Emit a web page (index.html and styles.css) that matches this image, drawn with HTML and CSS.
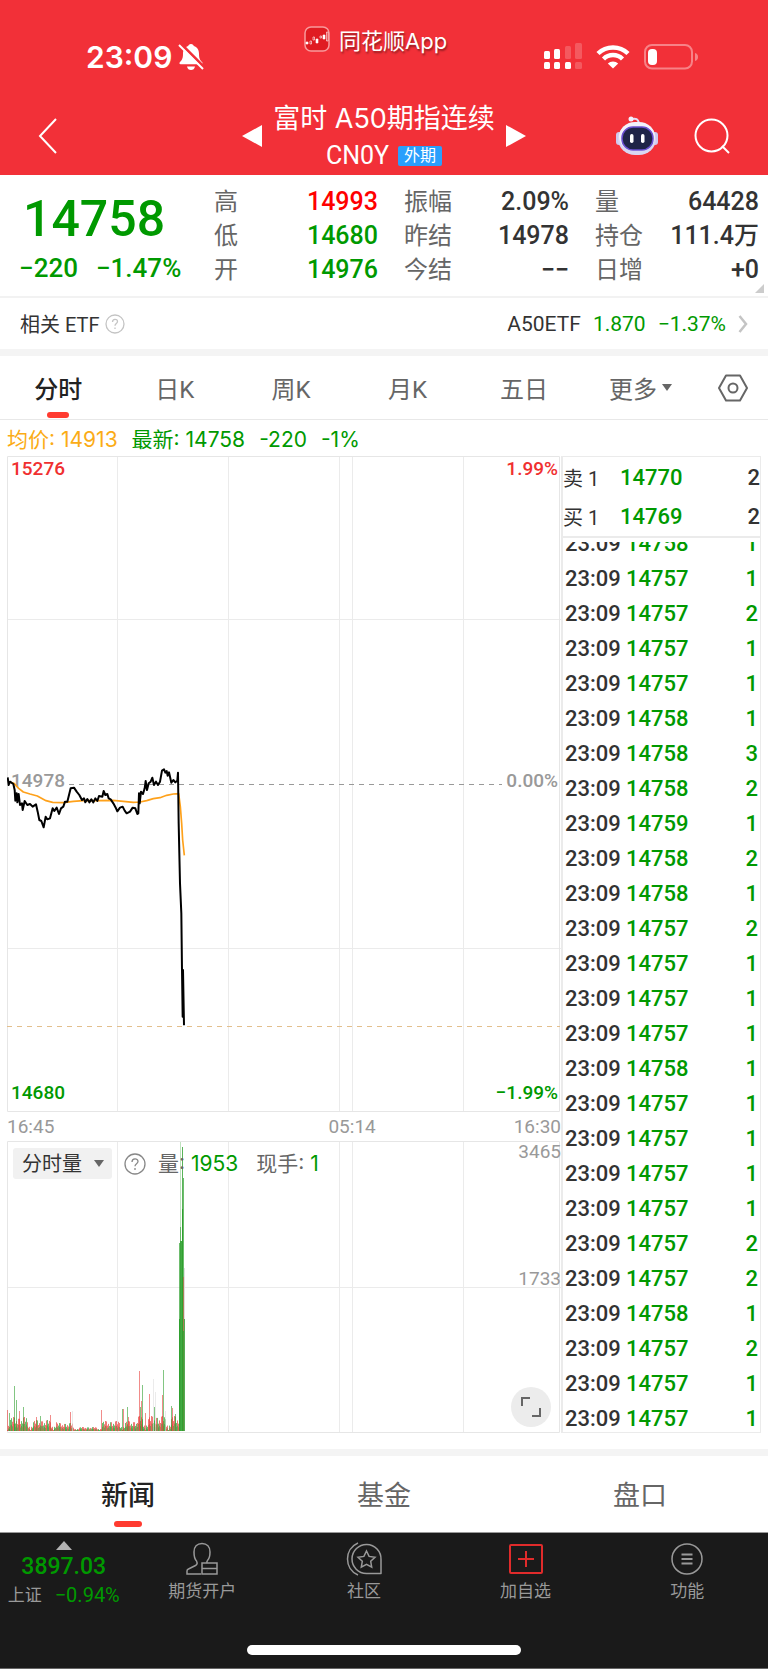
FILE: index.html
```html
<!DOCTYPE html>
<html lang="zh-CN">
<head>
    <meta charset="UTF-8">
    <meta name="viewport" content="width=device-width, initial-scale=1.0">
    <title>富时A50期指连续</title>
    <link rel="stylesheet" href="styles.css">
</head>
<body>
    <header class="header">
        <div class="status-bar">
            <div class="clock">
                <span>23:09</span>
                <svg width="26" height="28" viewBox="0 0 26 28">
                    <path d="M13 1c1.800 0 2.500 1 2.800 2 3.700 1.200 5.200 4.200 5.200 8 0 5 1.500 6.500 3 8 1 1 .6 2.300-.6 2.300H2.600C1.400 21.300 1 20 2 19c1.500-1.500 3-3 3-8 0-3.800 1.500-6.800 5.200-8 .3-1 1-2 2.800-2z" fill="#fff"/>
                    <path d="M9 23.500h8c-.5 2.500-2 3.500-4 3.500s-3.500-1-4-3.500z" fill="#fff"/>
                    <path d="M3 1l23 23" stroke="#f23038" stroke-width="3"/>
                    <path d="M1 2l24 24" stroke="#fff" stroke-width="2"/>
                </svg>
            </div>
            <div class="app-name">
                <svg width="26" height="26" viewBox="0 0 26 26">
                    <rect x="1" y="1" width="24" height="24" rx="6" fill="#e01c22" stroke="#f89a9c" stroke-width="1.500"/>
                    <g fill="#fff" stroke="#fff" stroke-width=".6">
                        <path d="M2 16h2v2H2zM12 13h2v4h-2zM19 9h2v4h-2z"/>
                        <path d="M6 15h1.500v3H6zM9 11h1.500v3H9zM16 10h1.500v2H16zM22.500 6H24v9h-1.500z" fill="none"/>
                    </g>
                </svg>
                <span>同花顺App</span>
            </div>
            <div class="signals">
                <svg width="38" height="28" viewBox="0 0 38 28" fill="#fff">
                    <rect x="0" y="8" width="6" height="8" rx="1.500"/>
                    <rect x="10" y="6" width="6" height="10" rx="1.500"/>
                    <rect x="21" y="3" width="6" height="13" rx="1.500" opacity=".2"/>
                    <rect x="31" y="0" width="7" height="16" rx="1.500" opacity=".2"/>
                    <rect x="0" y="19" width="6" height="7" rx="1.500"/>
                    <rect x="10" y="19" width="6" height="7" rx="1.500"/>
                    <rect x="21" y="19" width="6" height="7" rx="1.500"/>
                    <rect x="31" y="19" width="7" height="7" rx="1.500" opacity=".2"/>
                </svg>
                <svg width="34" height="26" viewBox="0 0 34 26" fill="none" stroke="#fff" stroke-width="4.500">
                    <path d="M2 9.500a21.500 21.500 0 0 1 30 0"/>
                    <path d="M7.500 15a13.500 13.500 0 0 1 19 0"/>
                    <path d="M17 24.500l-5.200-5a7.500 7.500 0 0 1 10.400 0z" fill="#fff" stroke="none"/>
                </svg>
                <svg width="54" height="26" viewBox="0 0 54 26">
                    <rect x="1" y="1" width="47" height="23.500" rx="7" fill="none" stroke="#fff" stroke-opacity=".4" stroke-width="2"/>
                    <path d="M51 9c2 .5 3 2 3 4s-1 3.500-3 4z" fill="#fff" fill-opacity=".4"/>
                    <rect x="4" y="5" width="9" height="16" rx="4" fill="#fff"/>
                </svg>
            </div>
        </div>
        <nav class="nav">
            <button class="icon-btn back" aria-label="返回">
                <svg width="20" height="36" viewBox="0 0 20 36" fill="none" stroke="#fff" stroke-width="2">
                    <path d="M18 1L2 18l16 17"/>
                </svg>
            </button>
            <div class="title-group">
                <button class="icon-btn" aria-label="上一个">
                    <svg width="20" height="22" viewBox="0 0 20 22"><path d="M20 0v22L0 11z" fill="#fff"/></svg>
                </button>
                <div class="title">
                    <h1>富时 A50期指连续</h1>
                    <p>CN0Y <span class="tag">外期</span></p>
                </div>
                <button class="icon-btn" aria-label="下一个">
                    <svg width="20" height="22" viewBox="0 0 20 22"><path d="M0 0v22l20-11z" fill="#fff"/></svg>
                </button>
            </div>
            <div class="tools">
                <button class="icon-btn" aria-label="智能助手">
                    <svg width="42" height="40" viewBox="0 0 42 40">
                        <path d="M16 3c4-1 6 0 7 4" fill="none" stroke="#e4dcf5" stroke-width="2"/>
                        <circle cx="15" cy="3" r="2.500" fill="#f3effc"/>
                        <rect x="0" y="16" width="6" height="13" rx="3" fill="#cfc9ee"/>
                        <rect x="36" y="16" width="6" height="13" rx="3" fill="#cfc9ee"/>
                        <rect x="2" y="7" width="38" height="32" rx="17" fill="#d9d6f2"/>
                        <rect x="3" y="6" width="36" height="29" rx="16" fill="#f2f1fb"/>
                        <rect x="6" y="11" width="31" height="23" rx="11" fill="#1f2447" stroke="#6a4fd0" stroke-width="1.500"/>
                        <rect x="14" y="18" width="3.500" height="9" rx="1.700" fill="#fff"/>
                        <rect x="25" y="18" width="3.500" height="9" rx="1.700" fill="#fff"/>
                    </svg>
                </button>
                <button class="icon-btn" aria-label="搜索">
                    <svg width="36" height="36" viewBox="0 0 36 36" fill="none" stroke="#fff" stroke-width="2">
                        <circle cx="17.500" cy="17.500" r="16"/>
                        <path d="M28 28l7 7"/>
                    </svg>
                </button>
            </div>
        </nav>
    </header>

    <section class="quote">
        <div class="last">
            <p class="last-price">14758</p>
            <p class="last-change"><span>−220</span><span>−1.47%</span></p>
        </div>
        <dl class="stats">
            <div><dt>高</dt><dd class="up">14993</dd></div>
            <div><dt>低</dt><dd class="down">14680</dd></div>
            <div><dt>开</dt><dd class="down">14976</dd></div>
        </dl>
        <dl class="stats">
            <div><dt>振幅</dt><dd>2.09%</dd></div>
            <div><dt>昨结</dt><dd>14978</dd></div>
            <div><dt>今结</dt><dd>−−</dd></div>
        </dl>
        <dl class="stats">
            <div><dt>量</dt><dd>64428</dd></div>
            <div><dt>持仓</dt><dd>111.4万</dd></div>
            <div><dt>日增</dt><dd>+0</dd></div>
        </dl>
        <span class="corner"></span>
    </section>

    <a class="etf" href="#etf">
        <span>相关 ETF</span>
        <svg width="20" height="20" viewBox="0 0 20 20" fill="none" stroke="#c4c4c4" stroke-width="1.300">
            <circle cx="10" cy="10" r="9"/>
            <path d="M7.500 8c0-3.500 5-3.500 5-.4 0 2-2.500 2-2.500 4.200M10 13.500V15"/>
        </svg>
        <span class="etf-name">A50ETF</span>
        <span class="down">1.870</span>
        <span class="down">−1.37%</span>
        <svg class="etf-arrow" width="10" height="18" viewBox="0 0 10 18" fill="none" stroke="#c4c4c4" stroke-width="2.500">
            <path d="M1.500 1L8 9l-6.500 8"/>
        </svg>
    </a>

    <nav class="periods">
        <button class="active">分时</button>
        <button>日K</button>
        <button>周K</button>
        <button>月K</button>
        <button>五日</button>
        <button>更多<svg width="10" height="7" viewBox="0 0 10 7"><path d="M0 0h10L5 7z" fill="#666"/></svg></button>
        <button class="settings" aria-label="设置">
            <svg width="30" height="28" viewBox="0 0 30 28" fill="none" stroke="#666" stroke-width="2">
                <path d="M8 1.500h14L29 14l-7 12.500H8L1 14z" stroke-linejoin="round"/>
                <circle cx="15" cy="14" r="4.500"/>
            </svg>
        </button>
    </nav>

    <p class="legend">
        <span class="avg">均价: 14913</span>
        <span class="down">最新: 14758</span>
        <span class="down">-220</span>
        <span class="down">-1%</span>
    </p>

    <main class="board">
        <div class="charts">
            <svg class="chart" viewBox="0 0 554 656">
                <g class="grid">
                    <path d="M110.500 0v656M221.500 0v656M332.500 0v656M345.500 0v656M456.500 0v656M0 163.500h554M0 492.500h554"/>
                    <path class="frame" d="M.5.5h552v655H.5z"/>
                </g>
                <path d="M62 328.500h433" stroke="#999" stroke-dasharray="5 5"/>
                <path d="M0 570.500h553" stroke="#e3bf8d" stroke-dasharray="5 5"/>
                <text x="4" y="19" class="t-up">15276</text>
                <text x="551" y="19" class="t-up end">1.99%</text>
                <text x="4" y="331">14978</text>
                <text x="551" y="331" class="end">0.00%</text>
                <text x="4" y="643" class="t-down">14680</text>
                <text x="551" y="643" class="t-down end">−1.99%</text>
                <svg viewBox="21 -852 1662 1968" width="554" height="656" fill="none" stroke-linejoin="round">
                    <polyline stroke="#fea11b" stroke-width="5" points="24,125 42,130 56,145 70,156 90,162 112,168 138,182 158,187 190,188 220,184 250,182 290,182 340,181 370,184 400,187 420,186 440,182 460,176 480,173 500,166 520,162 536,161 541,200 545,250 548,300 553,346"/>
                    <polyline stroke="#000" stroke-width="6" points="23,112 26,135 30,125 40,132 44,150 46,182 50,160 52,187 56,162 60,195 66,190 68,210 74,183 82,195 90,192 98,200 108,193 113,215 118,240 124,243 131,262 137,230 142,238 150,235 158,205 163,213 170,203 177,222 183,205 190,200 195,185 202,185 207,165 212,145 222,143 230,155 238,165 246,180 252,175 256,187 262,177 268,187 274,178 280,187 286,175 292,183 297,168 307,170 311,153 316,165 322,162 326,175 332,178 340,190 348,205 352,214 360,203 368,200 374,212 380,220 390,215 398,203 406,205 412,222 415,220 417,160 419,190 423,155 429,162 434,145 437,123 441,150 446,130 452,125 457,113 462,135 468,125 474,135 480,125 486,92 492,88 496,98 500,93 503,107 507,97 514,128 520,120 526,127 532,122 534,98 536,250 540,430 544,520 546,690 548,830 549,690 552,856"/>
                </svg>
            </svg>
            <div class="times"><span>16:45</span><span>05:14</span><span>16:30</span></div>
            <div class="volume">
                <svg class="chart" viewBox="0 0 554 292">
                    <g class="grid">
                        <path d="M110.500 0v292M221.500 0v292M332.500 0v292M345.500 0v292M456.500 0v292M0 146.500h554"/>
                        <path class="frame" d="M.5.5h552v291H.5z"/>
                    </g>
                    <text x="554" y="17" class="thin end">3465</text>
                    <text x="554" y="144" class="thin end">1733</text>
                    <g id="bars"></g>
                </svg>
                <div class="volume-head">
                    <span class="picker">
                        <select aria-label="指标">
                            <option>分时量</option>
                        </select>
                    </span>
                    <svg width="22" height="22" viewBox="0 0 22 22" fill="none" stroke="#888" stroke-width="1.300">
                        <circle cx="11" cy="11" r="10"/>
                        <path d="M8 9c0-4 6-4 6-.4 0 2.200-3 2.200-3 4.700M11 15v2"/>
                    </svg>
                    <span class="amount">量: <b>1953</b></span>
                    <span class="amount">现手: <b>1</b></span>
                </div>
                <button class="expand" aria-label="全屏">
                    <svg width="22" height="22" viewBox="0 0 22 22" fill="none" stroke="#666" stroke-width="2">
                        <path d="M2 10V2h8M20 12v8h-8"/>
                    </svg>
                </button>
            </div>
        </div>
        <aside class="side">
            <table class="orders">
                <tr><th>卖 1</th><td>14770</td><td>2</td></tr>
                <tr><th>买 1</th><td>14769</td><td>2</td></tr>
            </table>
            <div class="ticks">
                <table>
                    <tr><th>23:09</th><td>14758</td><td>1</td></tr>
                    <tr><th>23:09</th><td>14757</td><td>1</td></tr>
                    <tr><th>23:09</th><td>14757</td><td>2</td></tr>
                    <tr><th>23:09</th><td>14757</td><td>1</td></tr>
                    <tr><th>23:09</th><td>14757</td><td>1</td></tr>
                    <tr><th>23:09</th><td>14758</td><td>1</td></tr>
                    <tr><th>23:09</th><td>14758</td><td>3</td></tr>
                    <tr><th>23:09</th><td>14758</td><td>2</td></tr>
                    <tr><th>23:09</th><td>14759</td><td>1</td></tr>
                    <tr><th>23:09</th><td>14758</td><td>2</td></tr>
                    <tr><th>23:09</th><td>14758</td><td>1</td></tr>
                    <tr><th>23:09</th><td>14757</td><td>2</td></tr>
                    <tr><th>23:09</th><td>14757</td><td>1</td></tr>
                    <tr><th>23:09</th><td>14757</td><td>1</td></tr>
                    <tr><th>23:09</th><td>14757</td><td>1</td></tr>
                    <tr><th>23:09</th><td>14758</td><td>1</td></tr>
                    <tr><th>23:09</th><td>14757</td><td>1</td></tr>
                    <tr><th>23:09</th><td>14757</td><td>1</td></tr>
                    <tr><th>23:09</th><td>14757</td><td>1</td></tr>
                    <tr><th>23:09</th><td>14757</td><td>1</td></tr>
                    <tr><th>23:09</th><td>14757</td><td>2</td></tr>
                    <tr><th>23:09</th><td>14757</td><td>2</td></tr>
                    <tr><th>23:09</th><td>14758</td><td>1</td></tr>
                    <tr><th>23:09</th><td>14757</td><td>2</td></tr>
                    <tr><th>23:09</th><td>14757</td><td>1</td></tr>
                    <tr><th>23:09</th><td>14757</td><td>1</td></tr>
                </table>
            </div>
        </aside>
    </main>

    <nav class="sections">
        <button class="active">新闻</button>
        <button>基金</button>
        <button>盘口</button>
    </nav>

    <footer class="footer">
        <nav class="dock">
            <a class="index" href="#index">
                <svg width="16" height="9" viewBox="0 0 16 9"><path d="M8 0l8 9H0z" fill="#b3b3b3"/></svg>
                <span class="index-value">3897.03</span>
                <span class="index-row"><span>上证</span><span class="index-change">−0.94%</span></span>
            </a>
            <a href="#open">
                <svg width="34" height="34" viewBox="0 0 34 34" fill="none" stroke="#999" stroke-width="1.500">
                    <path d="M16 32H2v-3c0-1 .5-1.600 1.500-2l7-3.500c2-1 2-2.500 1-4.500C9.500 17 9 14 9 10c0-5 3-8.500 8-8.500s8 3.500 8 8.500c0 4-.5 6.500-2.500 8.500-.8 1-.8 1.500-.5 2.500"/>
                    <path d="M17 21h15v11H17zM17 26.500h15"/>
                </svg>
                <span>期货开户</span>
            </a>
            <a href="#community">
                <svg width="36" height="34" viewBox="0 0 36 34" fill="none" stroke="#999" stroke-width="1.500">
                    <path d="M35 31.500V17.500a14.500 14.500 0 1 0-14.500 14z" stroke-linejoin="round"/>
                    <path d="M12 1C-2 7-2 27 12 33"/>
                    <path d="M20.500 9l2.600 5.400 5.900.8-4.300 4.100 1 5.900-5.200-2.800-5.200 2.800 1-5.900-4.300-4.100 5.900-.8z"/>
                </svg>
                <span>社区</span>
            </a>
            <a href="#add">
                <svg width="34" height="34" viewBox="0 0 34 34" fill="none" stroke="#e02b2b" stroke-width="2">
                    <rect x="1" y="3" width="32" height="28" rx="1"/>
                    <path d="M9 17h16M17 9v16"/>
                </svg>
                <span>加自选</span>
            </a>
            <a href="#more">
                <svg width="34" height="34" viewBox="0 0 34 34" fill="none" stroke="#999" stroke-width="1.500">
                    <circle cx="17" cy="17" r="15"/>
                    <path d="M11.500 12.500h11M11.500 17h11M11.500 21.500h11" stroke-width="2"/>
                </svg>
                <span>功能</span>
            </a>
        </nav>
        <div class="home-bar"></div>
    </footer>

    <script>
        const green = '#2fa02f';
        const red = '#e8403c';
        const gray = '#dddddd';
        const base = 290;
        const bars = document.getElementById('bars');

        // [x, height, color]
        const spikes = [
            [0, 21, red], [2, 18, green], [7, 45, green], [9, 31, green], [12, 20, red], [16, 24, green],
            [29, 14, red], [33, 15, green], [43, 16, red], [63, 19, red], [65, 20, gray], [94, 21, red],
            [115, 22, green], [116, 22, red], [120, 24, green], [121, 14, red], [132, 60, red], [133, 24, green],
            [134, 30, red], [135, 46, green], [138, 18, red], [142, 37, red], [146, 52, gray], [147, 24, green],
            [148, 39, gray], [155, 36, red], [156, 61, green], [158, 20, gray], [164, 25, green], [165, 23, red], [168, 17, green]
        ];
        // [x, height, color, opacity]
        const surge = [
            [172, 112, green, 1], [172, 188, green, .7], [173, 289, green, .3], [173, 204, green, .6],
            [174, 190, green, .9], [175, 284, green, .8], [176, 253, green, .7], [175, 222, green, 1],
            [173, 190, green, .8], [177, 163, gray, .9], [176, 154, red, .5], [177, 112, green, .8], [176, 100, green, .7]
        ];

        function addBar(x, h, color, opacity) {
            const bar = document.createElementNS('http://www.w3.org/2000/svg', 'rect');
            bar.setAttribute('x', x);
            bar.setAttribute('y', base - h);
            bar.setAttribute('width', 1);
            bar.setAttribute('height', h);
            bar.setAttribute('fill', color);
            bar.setAttribute('opacity', opacity);
            bars.appendChild(bar);
        }

        function maxHeight(x) {
            if (x < 20) return 13;
            if (x < 50) return 10;
            if (x < 66) return 7;
            if (x < 95) return 3;
            if (x < 130) return 9;
            return 14;
        }

        for (let x = 0; x < 172; x++) {
            const h = 1 + (x * x * 7 % 23) / 22 * maxHeight(x);
            addBar(x, h, x * x % 11 < 5 ? red : green, 0.7);
            addBar(x, h / 2, x % 3 ? green : red, 0.5);
        }
        spikes.forEach(s => addBar(s[0], s[1], s[2], 0.6));
        surge.forEach(s => addBar(s[0], s[1], s[2], s[3]));
    </script>
</body>
</html>
```

FILE: styles.css
```css
* {
    box-sizing: border-box;
}

body {
    margin: 0;
    background: #fff;
    color: #333;
    font-family: Roboto, "Noto Sans CJK SC", sans-serif;
    font-size: 20px;
}

h1, p, dl, dd {
    margin: 0;
}

button {
    padding: 0;
    border: none;
    background: none;
    color: inherit;
    font: inherit;
    cursor: pointer;
}

a {
    color: inherit;
    text-decoration: none;
}

svg {
    display: block;
    flex-shrink: 0;
}

.up {
    color: #f00;
}

.down {
    color: #090;
}

/* header */
.header {
    background: #f23038;
    color: #fff;
}

.status-bar {
    display: grid;
    grid-template-columns: 304fr 240fr 154fr;
    height: 92px;
    padding-right: 70px;
}

.clock {
    display: flex;
    align-items: center;
    gap: 6px;
    padding: 22px 0 0 86px;
    font-family: Inter, sans-serif;
    font-size: 30px;
    font-weight: 600;
}

.app-name {
    display: flex;
    align-items: center;
    align-self: start;
    gap: 9px;
    height: 78px;
    font-family: Inter, "Noto Sans CJK SC", sans-serif;
    font-size: 22px;
    text-shadow: 1px 2px 2px rgba(0, 0, 0, 0.4);
}

.signals {
    display: flex;
    align-items: center;
    justify-content: flex-end;
    gap: 14px;
    padding-top: 22px;
}

.nav {
    display: grid;
    grid-template-columns: 1fr auto 1fr;
    align-items: center;
    height: 83px;
    padding: 4px 38px 0;
}

.back {
    justify-self: start;
}

.title-group {
    display: flex;
    align-items: center;
    gap: 11px;
}

.title {
    text-align: center;
}

.title h1 {
    font-family: Inter, "Noto Sans CJK SC", sans-serif;
    font-size: 27px;
    font-weight: 400;
    line-height: 40px;
}

.title p {
    display: flex;
    align-items: center;
    justify-content: center;
    gap: 9px;
    font-size: 25px;
    line-height: 34px;
}

.tag {
    padding: 0 6px;
    border-radius: 2px;
    background: #2a9ffc;
    font-size: 16px;
    line-height: 20px;
}

.tools {
    display: flex;
    align-items: center;
    justify-content: flex-end;
    gap: 36px;
}

/* quote */
.quote {
    position: relative;
    display: grid;
    grid-template-columns: 169fr 164fr 165fr 164fr;
    column-gap: 26px;
    padding: 10px 9px 9px 19px;
    border-bottom: 2px solid #f2f2f2;
}

.last {
    color: #090;
    font-weight: 500;
}

.last-price {
    padding: 4px 0 0 4px;
    font-size: 50px;
    line-height: 60px;
}

.last-change {
    display: flex;
    gap: 18px;
    font-size: 26px;
    line-height: 38px;
    white-space: nowrap;
}

.stats div {
    display: flex;
    justify-content: space-between;
    align-items: center;
    line-height: 34px;
    white-space: nowrap;
}

.stats dt {
    color: #666;
    font-size: 24px;
}

.stats dd {
    font-size: 25px;
    font-weight: 500;
}

.corner {
    position: absolute;
    right: 4px;
    bottom: 3px;
    border-left: 9px solid transparent;
    border-bottom: 9px solid #ccc;
}

.etf {
    display: flex;
    align-items: center;
    gap: 5px;
    height: 58px;
    padding: 0 20px;
    border-bottom: 7px solid #f4f4f4;
}

.etf .down {
    margin-left: 7px;
    font-size: 21px;
}

.etf-name {
    margin-left: auto;
    font-size: 21px;
}

.etf-arrow {
    margin-left: 7px;
}

/* period tabs */
.periods {
    display: flex;
    height: 64px;
    border-bottom: 1px solid #e8e8e8;
    color: #666;
    font-size: 24px;
}

.periods button {
    position: relative;
    display: flex;
    align-items: center;
    justify-content: center;
    gap: 5px;
    flex: 116;
}

.periods .settings {
    flex: 69;
}

.periods .active,
.sections .active {
    color: #222;
    font-weight: 500;
}

.active::after {
    content: "";
    position: absolute;
    bottom: 1px;
    left: 50%;
    width: 22px;
    height: 6px;
    margin-left: -11px;
    border-radius: 3px;
    background: #ff3b30;
}

.legend {
    display: flex;
    gap: 14px;
    padding: 3px 7px 0;
    font-family: Inter, "Noto Sans CJK SC", sans-serif;
    font-size: 21px;
    line-height: 33px;
}

.avg {
    color: #fbac16;
}

/* charts */
.board {
    display: grid;
    grid-template-columns: 554fr 200fr;
    padding: 0 7px 16px;
}

.chart {
    width: 100%;
    height: auto;
}

.chart text {
    fill: #999;
    font-size: 19px;
    font-weight: 500;
}

.chart .thin {
    font-weight: 400;
}

.chart .t-up {
    fill: #f03030;
}

.chart .t-down {
    fill: #090;
}

.chart .end {
    text-anchor: end;
}

.grid {
    fill: none;
    stroke: #ebebeb;
}

.frame {
    stroke: #e6e6e6;
}

.times {
    display: grid;
    grid-template-columns: 321fr auto 185fr;
    color: #999;
    font-size: 19px;
    line-height: 29px;
}

.times span:last-child {
    text-align: right;
}

.volume {
    position: relative;
}

.volume-head {
    position: absolute;
    top: 7px;
    left: 6px;
    display: flex;
    align-items: center;
    gap: 12px;
    color: #666;
    font-family: Inter, "Noto Sans CJK SC", sans-serif;
    font-size: 21px;
    line-height: 30px;
}

.picker {
    position: relative;
}

.picker select {
    display: block;
    width: 99px;
    height: 31px;
    padding: 0 9px;
    border: none;
    border-radius: 3px;
    background: #f1f1f1;
    color: #333;
    font: inherit;
    font-size: 20px;
    appearance: none;
}

.picker::after {
    content: "";
    position: absolute;
    top: 12px;
    right: 8px;
    border: 5px solid transparent;
    border-top: 7px solid #666;
    border-bottom: none;
}

.amount {
    margin-right: 6px;
}

.amount b {
    color: #090;
    font-weight: 400;
}

.expand {
    position: absolute;
    right: 10px;
    bottom: 6px;
    display: flex;
    align-items: center;
    justify-content: center;
    width: 40px;
    height: 40px;
    border-radius: 50%;
    background: #ececec;
}

/* order book and ticks */
.side {
    display: flex;
    flex-direction: column;
    border: 1px solid #ebebeb;
    border-left-width: 2px;
}

.side table {
    width: 100%;
    border-collapse: collapse;
    table-layout: fixed;
}

.side th {
    width: 61px;
    padding: 0;
    font-weight: 400;
    text-align: left;
}

.side td {
    padding: 0;
    color: #090;
    font-size: 22px;
    font-weight: 500;
}

.side td:last-child {
    width: 30px;
    text-align: right;
}

.orders {
    border-bottom: 2px solid #ebebeb;
}

.orders tr {
    height: 40px;
}

.side .orders th {
    width: 57px;
}

.side .orders td:last-child {
    color: #333;
}

/* the newest tick stays at the bottom, older ones slide under the order book */
.ticks {
    display: flex;
    flex: 1 1 0;
    flex-direction: column;
    justify-content: flex-end;
    min-height: 0;
    margin: 4px 0 -4px;
    padding: 0 2px;
    overflow: hidden;
}

.ticks tr {
    height: 35px;
}

.ticks th {
    font-size: 22px;
    font-weight: 500;
}

/* lower tabs */
.sections {
    display: flex;
    height: 84px;
    border-top: 7px solid #f4f4f4;
    border-bottom: 1px solid #999;
    color: #666;
    font-size: 27px;
}

.sections button {
    position: relative;
    flex: 1;
    padding-bottom: 2px;
}

.sections .active::after {
    bottom: 5px;
    width: 28px;
    margin-left: -14px;
}

/* footer */
.footer {
    padding-bottom: 13px;
    border-bottom: 1px solid #666;
    background: #1a1a1a;
    color: #999;
}

.dock {
    display: grid;
    grid-template-columns: 121fr repeat(4, 161fr);
    height: 112px;
    font-size: 17px;
}

.dock a {
    display: flex;
    flex-direction: column;
    align-items: center;
    gap: 1px;
    padding-top: 9px;
}

.dock .index {
    gap: 0;
    padding: 8px 0 0 6px;
}

.index-value {
    color: #090;
    font-size: 23px;
    font-weight: 500;
    line-height: 34px;
}

.index-row {
    display: flex;
    align-items: center;
    gap: 13px;
    line-height: 22px;
    white-space: nowrap;
}

.index-change {
    color: #090;
    font-size: 20px;
}

.home-bar {
    width: 274px;
    height: 10px;
    margin: 0 auto;
    border-radius: 5px;
    background: #fff;
}
```
